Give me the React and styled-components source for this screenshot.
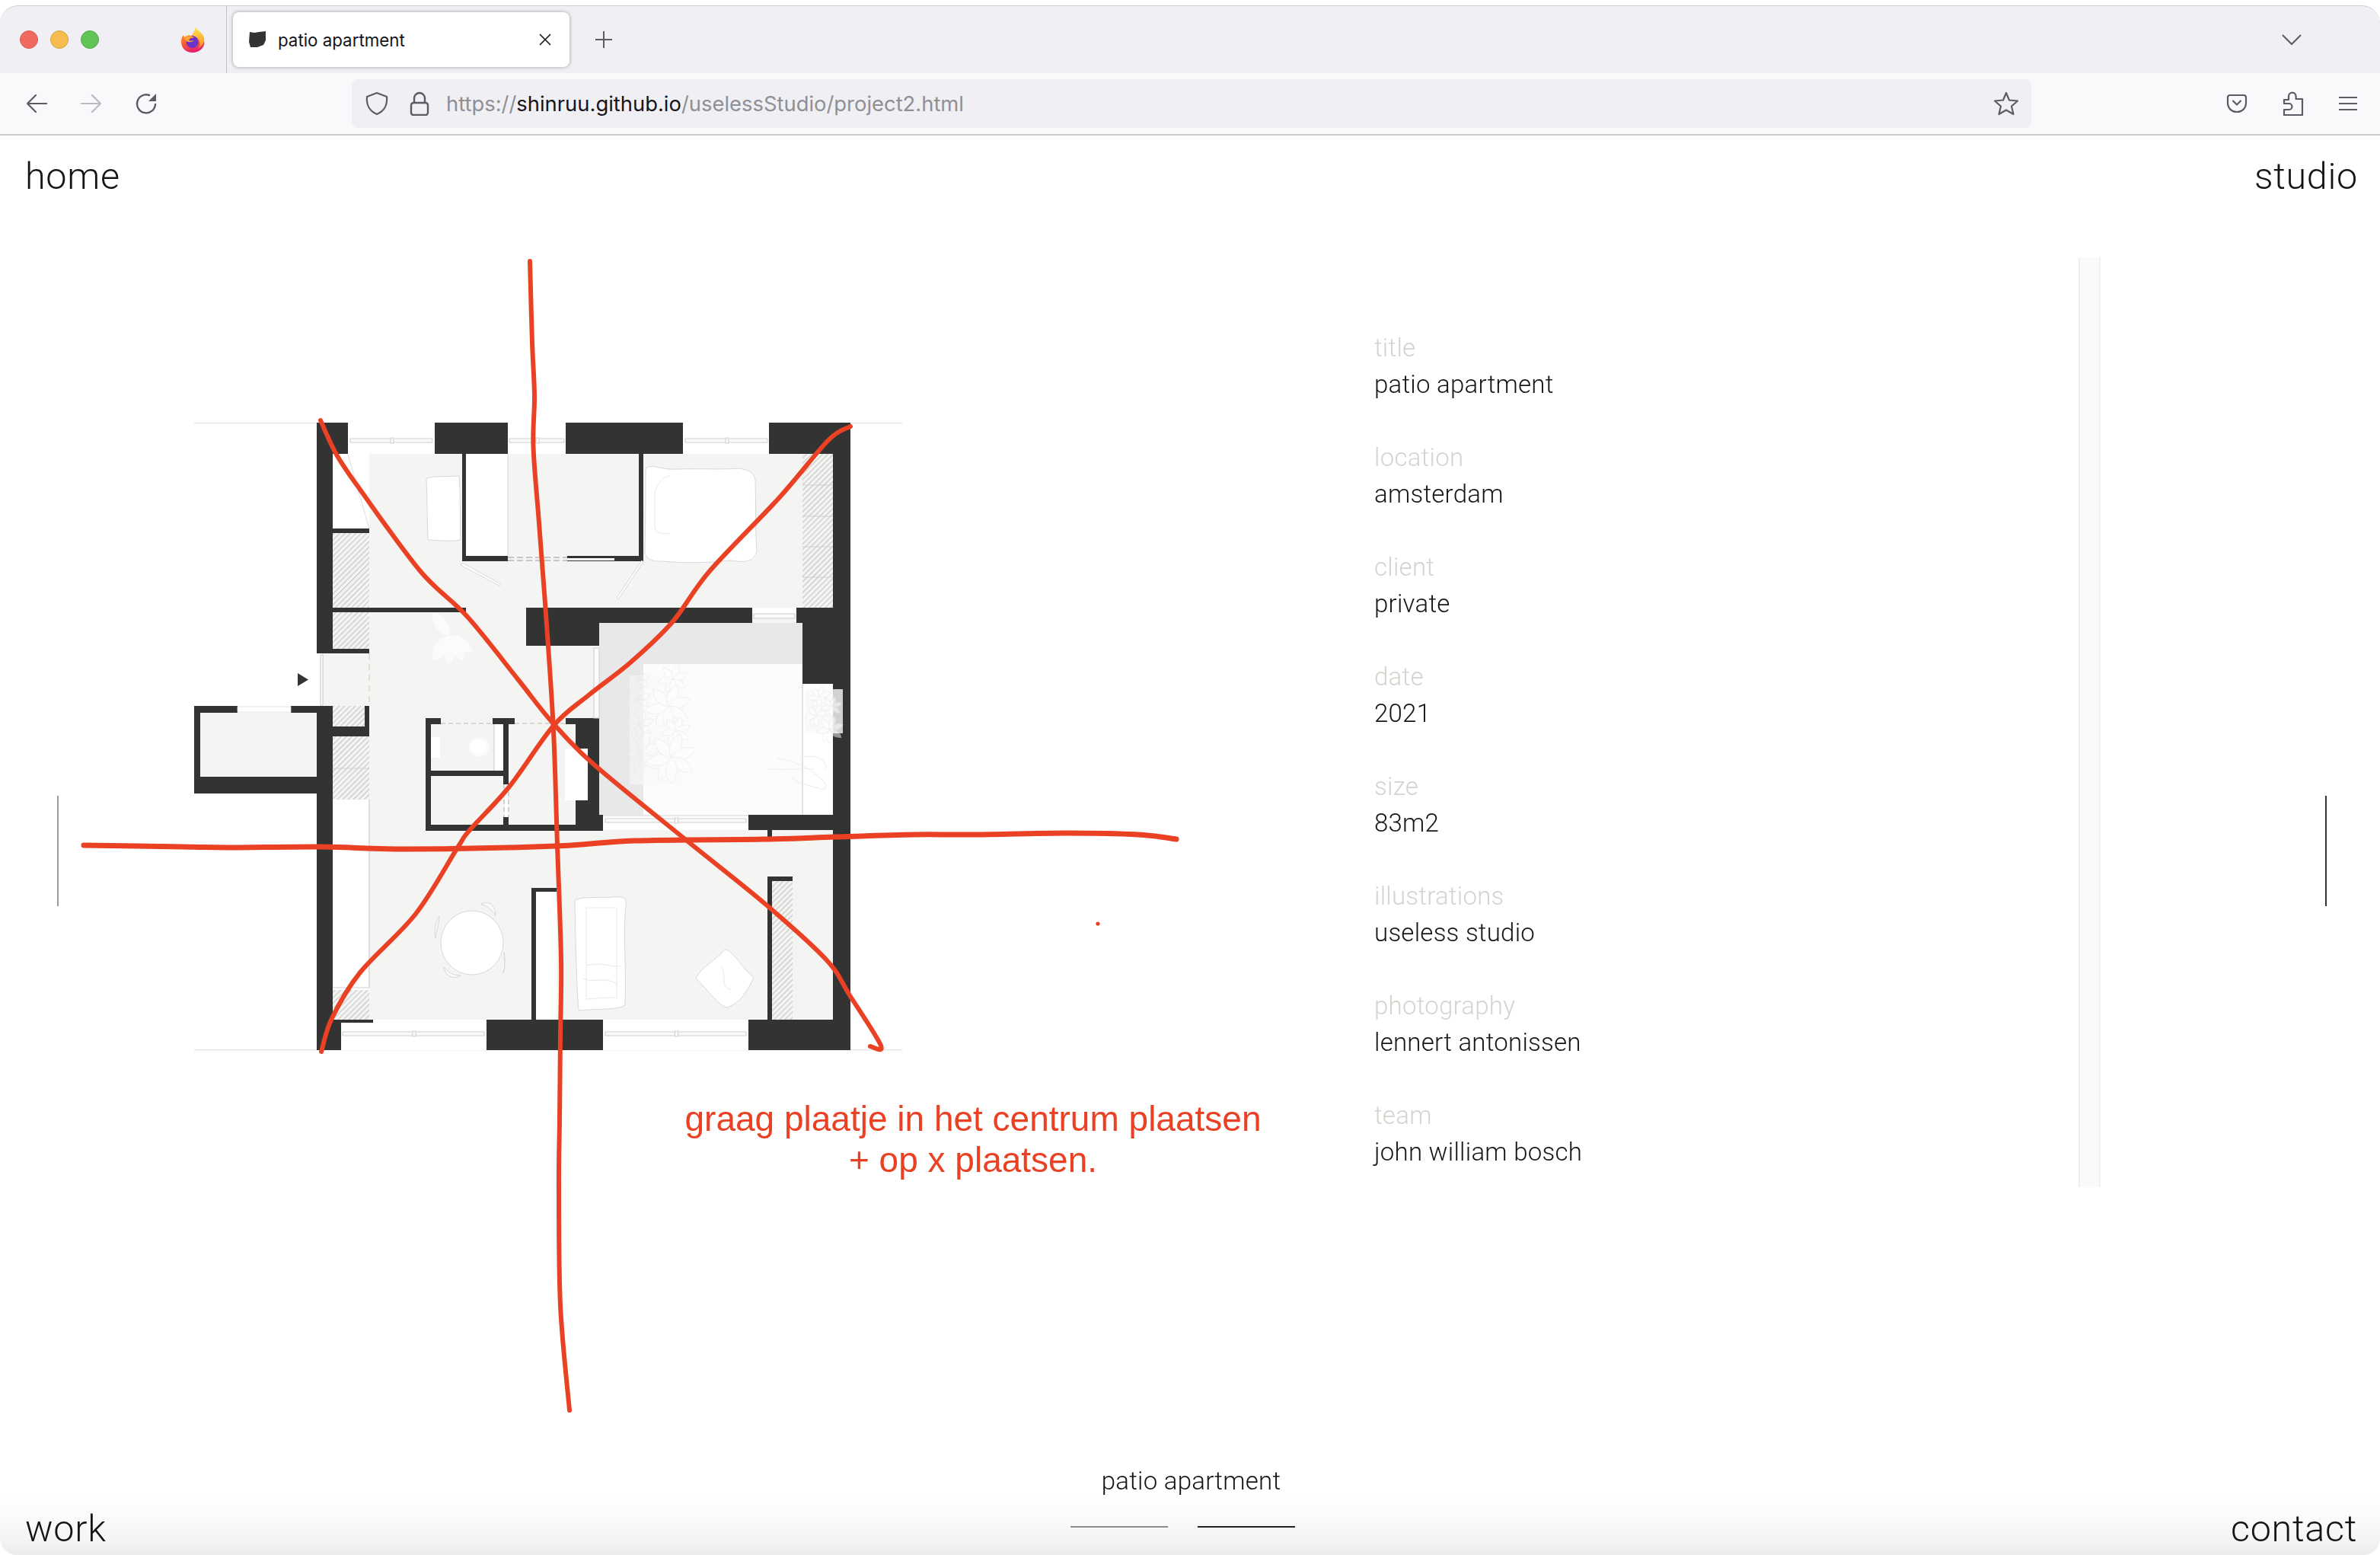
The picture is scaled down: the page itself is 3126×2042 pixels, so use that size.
import React from "react";
import styled, { createGlobalStyle } from "styled-components";

const Global = createGlobalStyle`
  html, body { margin: 0; padding: 0; background: #fff; }
  * { box-sizing: border-box; }
`;

const Window = styled.div`
  position: relative;
  width: 3126px;
  height: 2042px;
  overflow: hidden;
  background: #fff;
  padding-top: 7px;
  border-radius: 24px 24px 22px 22px;
  font-family: Roboto, "Liberation Sans", sans-serif;
  display: flex;
  flex-direction: column;
`;
const TabBar = styled.div`
  height: 89px;
  background: #f0f0f4;
  border-top: 1px solid #cfcfcf;
  border-radius: 24px 24px 0 0;
  display: flex;
  align-items: center;
  padding-left: 26px;
  flex: none;
`;
const Light = styled.span`
  width: 24px;
  height: 24px;
  border-radius: 50%;
  margin-right: 16px;
  background: ${(p) => p.$c};
  border: 1px solid ${(p) => p.$b};
  flex: none;
`;
const FoxSlot = styled.div`
  margin-left: 91px;
  width: 60px;
  display: flex;
`;
const TabDivider = styled.div`
  width: 1px;
  height: 100%;
  background: #c4c4c6;
  flex: none;
`;
const Tab = styled.div`
  margin-left: 8px;
  width: 442px;
  height: 72px;
  background: #fff;
  border-radius: 8px;
  box-shadow: 0 0 5px rgba(0, 0, 0, 0.35);
  display: flex;
  align-items: center;
  padding-left: 20px;
  flex: none;
`;
const TabTitle = styled.span`
  margin-left: 15px;
  font-family: Inter, "Liberation Sans", sans-serif;
  font-size: 22.3px;
  color: #15141a;
  flex: 1;
`;
const TabClose = styled.svg`
  margin-right: 24px;
`;
const NewTab = styled.svg`
  margin-left: 33px;
`;
const TabChevron = styled.svg`
  margin-left: auto;
  margin-right: 103px;
`;
const Toolbar = styled.div`
  height: 82px;
  background: #f9f9fb;
  border-bottom: 2px solid #cdcdcd;
  display: flex;
  align-items: center;
  flex: none;
`;
const NavIcons = styled.div`
  width: 462px;
  padding-left: 34px;
  display: flex;
  gap: 44px;
  align-items: center;
`;
const UrlBar = styled.div`
  width: 2206px;
  height: 64px;
  background: #f0f0f4;
  border-radius: 8px;
  display: flex;
  align-items: center;
  padding-left: 18px;
  padding-right: 16px;
`;
const UrlText = styled.span`
  margin-left: 22px;
  font-family: Inter, "Liberation Sans", sans-serif;
  font-size: 27.4px;
  color: #8f8f94;
  flex: 1;
  b { font-weight: 400; color: #15141a; }
`;
const LockIcon = styled.svg`
  margin-left: 28px;
`;
const ToolRight = styled.div`
  margin-left: 256px;
  display: flex;
  align-items: center;
  gap: 46px;
`;

const Page = styled.div`
  flex: 1;
  display: flex;
  flex-direction: column;
  min-height: 0;
`;
const TopNav = styled.header`
  height: 160px;
  padding: 26px 29px 0 33px;
  display: flex;
  justify-content: space-between;
  flex: none;
`;
const BigLink = styled.a`
  font-size: 48.5px;
  line-height: 56px;
  font-weight: 300;
  letter-spacing: 0.7px;
  color: #151515;
`;
const Main = styled.main`
  height: 1221px;
  display: flex;
  align-items: flex-start;
  flex: none;
`;
const Rail = styled.div`
  width: 2px;
  height: 145px;
  margin-top: 707px;
  margin-left: ${(p) => p.$ml}px;
  background: ${(p) => p.$c};
  flex: none;
`;
const PlanSvg = styled.svg`
  margin-left: 178px;
  margin-top: 217px;
  flex: none;
  display: block;
`;
const Details = styled.dl`
  margin: 0 0 0 620px;
  width: 925px;
  padding-top: 95px;
  flex: none;
`;
const Item = styled.div`
  height: 144px;
`;
const Label = styled.dt`
  font-size: 33px;
  line-height: 48px;
  font-weight: 300;
  letter-spacing: 0.25px;
  color: #d4d4ce;
`;
const Value = styled.dd`
  margin: 0;
  font-size: 33px;
  line-height: 48px;
  font-weight: 300;
  letter-spacing: 0.25px;
  color: #151515;
`;
const Track = styled.div`
  width: 29px;
  height: 1221px;
  background: #fafafa;
  border-left: 2px solid #eeeeee;
  border-right: 2px solid #f1f1f1;
  flex: none;
`;
const Footer = styled.footer`
  margin-top: auto;
  height: 130px;
  padding: 0 30px 6px 33px;
  display: grid;
  grid-template-columns: 1fr auto 1fr;
  align-items: end;
  background: linear-gradient(#fff 0, #fff 38%, #fbfbfb 62%, #f4f4f4 85%, #ebebeb 100%);
`;
const FootRight = styled.div`
  text-align: right;
`;
const Center = styled.div`
  display: flex;
  flex-direction: column;
  align-items: center;
  padding-bottom: 30px;
`;
const Caption = styled.div`
  font-size: 33px;
  line-height: 40px;
  font-weight: 300;
  letter-spacing: 0.25px;
  color: #151515;
  margin-bottom: 39px;
`;
const Bars = styled.div`
  display: flex;
  gap: 39px;
  padding-right: 22px;
`;
const Bar = styled.span`
  width: 128px;
  height: 2px;
  background: ${(p) => p.$c};
`;
const MarkupLayer = styled.svg`
  position: absolute;
  left: 0;
  top: 0;
  pointer-events: none;
`;
const Note = styled.div`
  position: absolute;
  left: 878px;
  top: 1442px;
  width: 800px;
  text-align: center;
  font-family: "Liberation Sans", Arial, sans-serif;
  font-size: 46px;
  line-height: 54px;
  color: #ea4125;
`;

const ICON = "#5b5b66";

const Fox = () => (
  <svg width="32" height="33" viewBox="0 0 32 33">
    <defs>
      <linearGradient id="foxg" x1="0" y1="0" x2="0.3" y2="1">
        <stop offset="0" stopColor="#ff9b26" />
        <stop offset="0.55" stopColor="#ff6a2c" />
        <stop offset="1" stopColor="#e5236b" />
      </linearGradient>
      <linearGradient id="foxy" x1="0.4" y1="0" x2="0.6" y2="1">
        <stop offset="0" stopColor="#ffe14a" />
        <stop offset="1" stopColor="#ff8f26" />
      </linearGradient>
    </defs>
    <path d="M20 1c1 3 6 6 9 11 2 5 3 8 2 11-2 6-8 10-15 10C7 33 1 27 1 19c0-4 1-7 3-9 0 2 1 3 2 4 1-3 4-4 7-4-1 1-1 1-1 2 3-1 6-5 8-11z" fill="url(#foxg)" />
    <path d="M19 0c0 5-3 10-5 12 5-1 10 2 11 7 1 3 0 6-2 9 5-3 9-8 8-14-1-6-8-10-12-14z" fill="url(#foxy)" />
    <circle cx="15.5" cy="19" r="8" fill="#6b34c9" />
    <path d="M5 13c3-3 10-3 13 1-3-1-6 0-7 3 2 1 4 1 7 0-3 3-9 3-11 0-1-1-2-3-2-4z" fill="#ff9f2e" />
  </svg>
);
const Favicon = () => (
  <svg width="24" height="22" viewBox="0 0 24 22">
    <path d="M2 1 L8 2 L14 1 L23 0 L23 12 L20 18 L12 21 L3 21 L1 14 Z" fill="#333" />
  </svg>
);
const Stroke = ({ w, h, children, sw = 2.2, color = ICON }) => (
  <svg width={w} height={h} viewBox={`0 0 ${w} ${h}`} fill="none" stroke={color} strokeWidth={sw} strokeLinecap="round" strokeLinejoin="round">
    {children}
  </svg>
);

const Rects = ({ items, fill }) =>
  items.map(([x1, y1, x2, y2], i) => <rect key={i} x={x1} y={y1} width={x2 - x1} height={y2 - y1} fill={fill} />);

const WALLS = [
  [416, 555, 457, 596], [571, 555, 667, 596], [743, 555, 897, 596], [1010, 555, 1117, 596],
  [416, 555, 437, 858], [1094, 555, 1117, 1379], [437, 694, 485, 700], [437, 798, 612, 804], [437, 852, 485, 858],
  [607, 596, 612, 737], [607, 730, 667, 737], [745, 730, 845, 737], [839, 596, 845, 737],
  [691, 798, 988, 818], [691, 818, 787, 848], [1046, 798, 1117, 818], [1054, 798, 1117, 898], [1107, 898, 1117, 1090],
  [416, 927, 437, 1379], [255, 927, 312, 936], [382, 927, 416, 936], [255, 927, 263, 1042], [255, 1020, 416, 1042],
  [479, 927, 485, 954], [437, 954, 485, 967],
  [416, 1339, 448, 1379], [416, 1339, 490, 1343],
  [639, 1339, 792, 1379], [983, 1339, 1117, 1379], [983, 1070, 1117, 1090],
  [559, 943, 579, 951], [647, 943, 676, 951], [743, 943, 787, 951], [756, 951, 787, 983], [772, 983, 787, 1051], [756, 1051, 787, 1072], [787, 1070, 792, 1091],
  [559, 943, 566, 1091], [559, 1083, 792, 1091], [559, 1012, 668, 1019], [661, 951, 668, 1030], [661, 1073, 668, 1083], [756, 1070, 787, 1083],
  [698, 1166, 731, 1171], [698, 1166, 704, 1339],
  [1008, 1090, 1014, 1100], [1008, 1151, 1041, 1157], [1008, 1157, 1014, 1339],
];
const FILL = [
  [437, 596, 1094, 798], [485, 798, 1054, 1070], [424, 858, 485, 927], [485, 1070, 1094, 1339], [263, 936, 416, 1020], [566, 951, 756, 1083],
];
const WHITE = [
  [437, 596, 485, 694], [612, 596, 667, 730], [437, 1050, 485, 1297], [704, 1171, 731, 1339], [649, 951, 661, 1012], [742, 983, 772, 1051],
  [1054, 898, 1107, 1070], [457, 555, 571, 596], [667, 555, 743, 596], [897, 555, 1010, 596], [792, 1072, 983, 1090], [988, 798, 1046, 806], [448, 1343, 639, 1379], [792, 1339, 983, 1379], [663, 1030, 667, 1073],
];
const HATCH = [
  [437, 700, 485, 798], [437, 804, 485, 852], [437, 927, 479, 954], [437, 967, 485, 1050], [437, 1300, 485, 1339], [1014, 1157, 1041, 1339], [1054, 596, 1094, 798],
];

const Frames = ({ x1, x2, y }) => (
  <g fill="#fafafa" stroke="#cfcfcf" strokeWidth="1">
    <rect x={x1} y={y} width={x2 - x1} height="5" />
    <rect x={(x1 + x2) / 2 - 1} y={y - 1} width="4" height="7" />
  </g>
);

const ANGLES = [-150, -100, -40, 20, 70, 125, 180];
const Plant = ({ x, y, s = 1, stroke = "#e7e7e5", fill = "#fff", angles = ANGLES }) => (
  <g transform={`translate(${x} ${y}) scale(${s})`} fill={fill} stroke={stroke} strokeWidth={1 / s}>
    {angles.map((a) => (
      <path key={a} d="M0 0C-7-6-9-18 0-28C9-18 7-6 0 0Z" transform={`rotate(${a})`} />
    ))}
  </g>
);

const Plan = () => (
  <PlanSvg width="930" height="826" viewBox="255 555 930 826">
    <defs>
      <pattern id="hatch" width="5" height="5" patternUnits="userSpaceOnUse" patternTransform="rotate(45)">
        <rect width="5" height="5" fill="#f4f4f2" />
        <rect width="1.3" height="5" fill="#c9c9c7" />
      </pattern>
    </defs>
    <rect x="255" y="555" width="930" height="1.4" fill="#e6e6e4" />
    <rect x="255" y="1378" width="930" height="1.4" fill="#e6e6e4" />
    <Rects items={FILL} fill="#f4f4f2" />
    <rect x="787" y="818" width="267" height="254" fill="#e8e8e8" />
    <rect x="845" y="872" width="209" height="198" fill="#fcfcfc" />
    <Rects items={WHITE} fill="#fff" />
    <Rects items={HATCH} fill="url(#hatch)" />
    <g stroke="#cfcfcd" strokeWidth="1.2">
      <path d="M1054 637H1094M1054 678H1094M1054 718H1094M1054 758H1094M437 1297H485M437 1009H485M1054 898V1070M485 1050V1297" />
    </g>
    <path d="M457 597L485 694" fill="none" stroke="#ddd" strokeWidth="1" />
    <path d="M667 596V730" fill="none" stroke="#d4d4d2" strokeWidth="1" />
    <path d="M649 951V1012" fill="none" stroke="#c8c8c6" strokeWidth="1" />
    <path d="M485 1050V1297" fill="none" stroke="#ddd" strokeWidth="1" />
    <Rects items={WALLS} fill="#333333" />
    <rect x="745" y="733" width="62" height="3" fill="#fff" />
    <path d="M667 732H745M667 736H745" stroke="#999" strokeWidth="1" strokeDasharray="8 4" />
    <path d="M485 858V927" stroke="#d6d6d4" strokeWidth="1.5" strokeDasharray="8 6" />
    <path d="M579 950H647M676 950H743" stroke="#bbb" strokeWidth="1" strokeDasharray="6 4" />
    <path d="M662 1030V1073M668 1030V1073" stroke="#bbb" strokeWidth="1.2" strokeDasharray="6 4" />
    <rect x="421" y="860" width="3" height="66" fill="#fff" stroke="#bbb" strokeWidth="0.8" />
    <path d="M391 884L405 892.5L391 901Z" fill="#333" />
    <rect x="312" y="928" width="70" height="7" fill="#fff" stroke="#ddd" strokeWidth="0.8" />
    <Frames x1={460} x2={568} y={576} />
    <Frames x1={669} x2={741} y={576} />
    <Frames x1={900} x2={1008} y={576} />
    <Frames x1={450} x2={636} y={1355} />
    <Frames x1={795} x2={980} y={1355} />
    <Frames x1={795} x2={980} y={1075} />
    <rect x="990" y="806" width="54" height="6" fill="#fafafa" stroke="#ccc" strokeWidth="1" />
    <rect x="780" y="851" width="7" height="92" fill="#fbfbfb" stroke="#ccc" strokeWidth="1" />
    <g fill="#fff" stroke="#d8d8d6" strokeWidth="1">
      <ellipse cx="629" cy="981" rx="12" ry="11" stroke="#fbfbfb" strokeWidth="3" />
      <rect x="566" y="968" width="12" height="27" stroke="none" />
      <path d="M560 628C570 625 585 626 603 625 605 650 604 680 605 709 590 712 575 709 562 709 561 680 561 650 560 628Z" />
      <path d="M848 615C856 608 870 618 890 616 920 615 950 617 970 615 985 617 991 622 992 630 993 660 992 700 994 724 990 738 980 739 960 736 930 739 900 740 870 737 850 738 846 730 847 720 848 680 848 650 848 615Z" />
      <path d="M607 739L658 767L656 769L605 742Z" />
      <path d="M845 738L812 787L810 785L843 736Z" />
      <ellipse cx="620" cy="1238" rx="41" ry="42" />
      <path d="M632 1187C645 1182 650 1190 651 1203 646 1194 640 1190 632 1187Z" fill="#fafafa" />
      <path d="M577 1203C570 1215 571 1225 572 1232 574 1220 577 1212 577 1203Z" fill="#fafafa" />
      <path d="M583 1270C585 1282 595 1287 605 1281 595 1281 590 1278 583 1270Z" fill="#fafafa" />
      <path d="M660 1278C665 1272 662 1262 662 1250 664 1262 663 1276 660 1278Z" fill="#fafafa" />
      <path d="M755 1182C770 1176 790 1180 805 1178 822 1176 823 1182 822 1190 818 1230 823 1270 821 1320 808 1327 790 1324 760 1327 757 1290 756 1240 755 1182Z" />
      <path d="M952 1247C962 1247 972 1268 990 1284 982 1300 972 1318 955 1323 945 1322 930 1300 914 1285 920 1270 942 1260 952 1247Z" />
    </g>
    <g fill="none" stroke="#e8e8e6" strokeWidth="1">
      <path d="M770 1192H810V1310C790 1310 775 1312 770 1312Z" />
      <path d="M770 1268C790 1262 808 1272 815 1268M766 1285C780 1292 800 1280 812 1295" />
      <path d="M860 650C860 640 870 625 880 625M860 650V690C860 700 870 702 880 700" />
      <path d="M948 1270C955 1285 945 1295 960 1300" />
    </g>
    <Plant x={590} y={835} s={1.35} stroke="none" fill="#fbfbfa" angles={[-150, -35, 125, 180, 150, 215]} />
    <rect x="827" y="887" width="71" height="143" fill="#f9f9f8" opacity="0.6" />
    <rect x="1057" y="905" width="50" height="58" fill="#f9f9f8" opacity="0.8" />
    <g opacity="0.5">
      <Plant x={838} y={892} s={0.6} fill="none" />
      <Plant x={838} y={918} s={0.6} fill="none" />
      <Plant x={884} y={892} s={0.7} />
      <Plant x={878} y={928} s={1.1} />
      <Plant x={888} y={960} s={0.7} />
      <Plant x={840} y={952} s={0.7} fill="none" />
      <Plant x={840} y={990} s={1.2} fill="none" />
      <Plant x={882} y={995} s={1.2} />
      <Plant x={1076} y={915} s={0.55} />
      <Plant x={1092} y={928} s={0.5} />
      <Plant x={1072} y={940} s={0.55} />
      <Plant x={1090} y={958} s={0.65} />
    </g>
    <path d="M1010 1010C1030 1012 1050 1008 1070 1010M1020 995C1040 1000 1060 1005 1075 1020 1090 1030 1085 1040 1075 1035 1055 1030 1040 1025 1040 1020M1050 995C1070 990 1085 995 1085 1010" fill="none" stroke="#efefed" strokeWidth="1.2" />
  </PlanSvg>
);

const smooth = (pts) => {
  let d = `M${pts[0][0]} ${pts[0][1]}`;
  for (let i = 0; i < pts.length - 1; i++) {
    const p0 = pts[i - 1] || pts[i];
    const p1 = pts[i];
    const p2 = pts[i + 1];
    const p3 = pts[i + 2] || p2;
    d += `C${p1[0] + (p2[0] - p0[0]) / 6} ${p1[1] + (p2[1] - p0[1]) / 6} ${p2[0] - (p3[0] - p1[0]) / 6} ${p2[1] - (p3[1] - p1[1]) / 6} ${p2[0]} ${p2[1]}`;
  }
  return d;
};
const STROKES = [
  { w: 6, pts: [[696, 343], [699, 450], [702, 520], [700.5, 587], [708, 687], [718, 820], [727, 960], [732, 1110], [737, 1260], [736, 1360], [735, 1470], [734, 1555], [736, 1714], [748, 1852]] },
  { w: 6, pts: [[421, 552], [442, 597], [473, 643], [552, 750], [614, 810], [681, 893], [724, 947], [779, 1003], [901, 1103], [1005, 1187], [1085, 1260], [1116, 1307], [1157, 1373], [1143, 1374]] },
  { w: 6, pts: [[1117, 560], [1088, 578], [1024, 653], [932, 750], [883, 817], [828, 870], [773, 913], [727, 953], [669, 1033], [617, 1090], [601, 1113], [546, 1200], [473, 1277], [436, 1337], [422, 1381]] },
  { w: 7, pts: [[110, 1110], [240, 1112], [301, 1113], [424, 1112], [534, 1115], [730, 1111], [834, 1104], [1005, 1102], [1097, 1099], [1200, 1096], [1276, 1096], [1400, 1094], [1495, 1096], [1545, 1102]] },
];

const Markup = () => (
  <MarkupLayer width="3126" height="2042" viewBox="0 0 3126 2042">
    {STROKES.map((s, i) => (
      <path key={i} d={smooth(s.pts)} fill="none" stroke="#ea4125" strokeWidth={s.w} strokeLinecap="round" strokeLinejoin="round" />
    ))}
    <circle cx="1442" cy="1213" r="2.6" fill="#ea4125" />
  </MarkupLayer>
);

const DETAILS = [
  ["title", "patio apartment"],
  ["location", "amsterdam"],
  ["client", "private"],
  ["date", "2021"],
  ["size", "83m2"],
  ["illustrations", "useless studio"],
  ["photography", "lennert antonissen"],
  ["team", "john william bosch"],
];

export default function App() {
  return (
    <Window>
      <Global />
      <TabBar>
        <Light $c="#ee6a5f" $b="#d8584e" />
        <Light $c="#f5bd4f" $b="#d9a43c" />
        <Light $c="#61c454" $b="#50a945" />
        <FoxSlot><Fox /></FoxSlot>
        <TabDivider />
        <Tab>
          <Favicon />
          <TabTitle>patio apartment</TabTitle>
          <TabClose width="16" height="16" viewBox="0 0 16 16" fill="none" stroke="#15141a" strokeWidth="1.6">
            <path d="M1 1L15 15M15 1L1 15" />
          </TabClose>
        </Tab>
        <NewTab width="24" height="24" viewBox="0 0 24 24" fill="none" stroke={ICON} strokeWidth="2">
          <path d="M12 1V23M1 12H23" />
        </NewTab>
        <TabChevron width="26" height="16" viewBox="0 0 26 16" fill="none" stroke={ICON} strokeWidth="2">
          <path d="M1 2L13 14L25 2" />
        </TabChevron>
      </TabBar>
      <Toolbar>
        <NavIcons>
          <Stroke w={28} h={26}><path d="M27 13H2M13 2L2 13L13 24" /></Stroke>
          <Stroke w={28} h={26} color="#b9b9be"><path d="M1 13H26M15 2L26 13L15 24" /></Stroke>
          <svg width="28" height="28" viewBox="0 0 28 28" fill="none" stroke={ICON} strokeWidth="2.4" strokeLinecap="round">
            <path d="M26 15A12 12 0 1 1 18 3" />
            <path d="M27 1V11H17Z" fill={ICON} stroke="none" />
          </svg>
        </NavIcons>
        <UrlBar>
          <Stroke w={30} h={32}><path d="M15 2L28 7C29 17 25 26 15 30C5 26 1 17 2 7Z" /></Stroke>
          <LockIcon width="26" height="32" viewBox="0 0 26 32" fill="none" stroke={ICON} strokeWidth="2.4" strokeLinejoin="round">
            <rect x="2" y="15" width="22" height="16" rx="3" />
            <path d="M6 15V9A7 7 0 0 1 20 9V15" />
          </LockIcon>
          <UrlText>https://<b>shinruu.github.io</b>/uselessStudio/project2.html</UrlText>
          <Stroke w={34} h={32}><path d="M17 2L21 11.5L32 12.5L24 19.5L26.5 30L17 24.5L7.5 30L10 19.5L2 12.5L13 11.5Z" /></Stroke>
        </UrlBar>
        <ToolRight>
          <Stroke w={28} h={26}>
            <path d="M2 5C2 3 3 2 5 2H23C25 2 26 3 26 5V12C26 19 21 24 14 24C7 24 2 19 2 12Z" />
            <path d="M9 9.5L14 14.5L19 9.5" />
          </Stroke>
          <Stroke w={28} h={32}>
            <path d="M2 11H8V6.5A4.8 4.8 0 0 1 17.6 6.5V10H26V31H2V24H8.5A4 4 0 0 0 8.5 16H2Z" />
          </Stroke>
          <Stroke w={24} h={20} sw={2.2}><path d="M0 2H24M0 10H24M0 18H24" /></Stroke>
        </ToolRight>
      </Toolbar>
      <Page>
        <TopNav>
          <BigLink>home</BigLink>
          <BigLink>studio</BigLink>
        </TopNav>
        <Main>
          <Rail $ml={75} $c="#9a9a9a" />
          <Plan />
          <Details>
            {DETAILS.map(([k, v]) => (
              <Item key={k}>
                <Label>{k}</Label>
                <Value>{v}</Value>
              </Item>
            ))}
          </Details>
          <Track />
          <Rail $ml={295} $c="#333" />
        </Main>
        <Footer>
          <BigLink>work</BigLink>
          <Center>
            <Caption>patio apartment</Caption>
            <Bars>
              <Bar $c="#8c8c8c" />
              <Bar $c="#222" />
            </Bars>
          </Center>
          <FootRight><BigLink>contact</BigLink></FootRight>
        </Footer>
      </Page>
      <Markup />
      <Note>graag plaatje in het centrum plaatsen<br />+ op x plaatsen.</Note>
    </Window>
  );
}
